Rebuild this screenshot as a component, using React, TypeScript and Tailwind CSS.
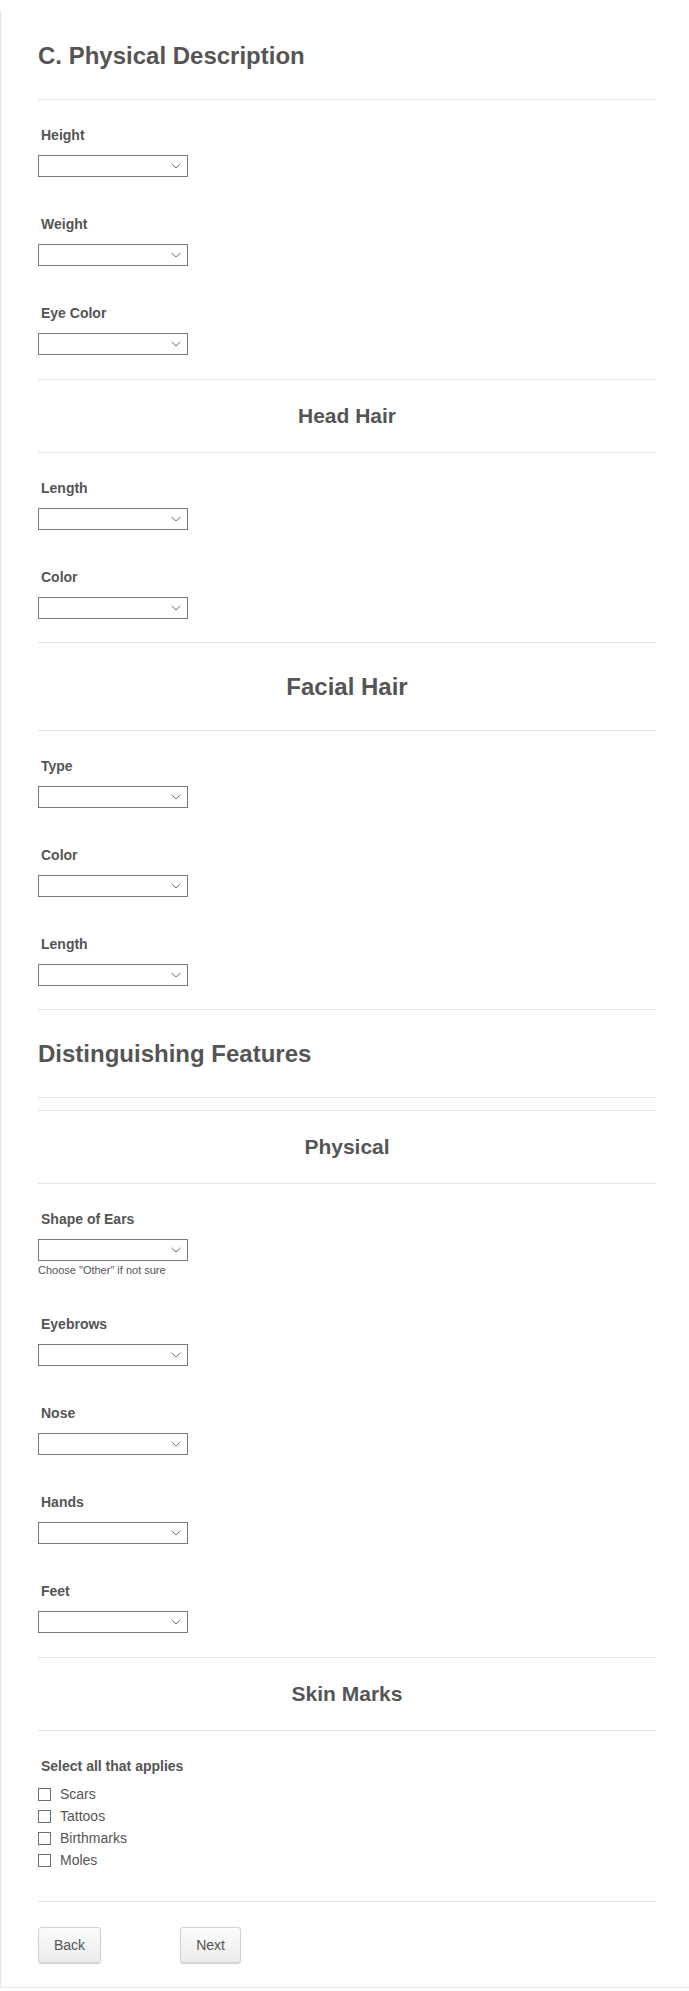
import React from 'react';

const font = { fontFamily: '"Liberation Sans", Arial, sans-serif' };

type Item =
  | { kind: 'title'; text: string }
  | { kind: 'big'; text: string; center?: boolean }
  | { kind: 'sub'; text: string }
  | { kind: 'field'; label: string; help?: string }
  | { kind: 'checks'; label: string; options: string[] };

const items: Item[] = [
  { kind: 'title', text: 'C. Physical Description' },
  { kind: 'field', label: 'Height' },
  { kind: 'field', label: 'Weight' },
  { kind: 'field', label: 'Eye Color' },
  { kind: 'sub', text: 'Head Hair' },
  { kind: 'field', label: 'Length' },
  { kind: 'field', label: 'Color' },
  { kind: 'big', text: 'Facial Hair', center: true },
  { kind: 'field', label: 'Type' },
  { kind: 'field', label: 'Color' },
  { kind: 'field', label: 'Length' },
  { kind: 'big', text: 'Distinguishing Features' },
  { kind: 'sub', text: 'Physical' },
  { kind: 'field', label: 'Shape of Ears', help: 'Choose "Other" if not sure' },
  { kind: 'field', label: 'Eyebrows' },
  { kind: 'field', label: 'Nose' },
  { kind: 'field', label: 'Hands' },
  { kind: 'field', label: 'Feet' },
  { kind: 'sub', text: 'Skin Marks' },
  { kind: 'checks', label: 'Select all that applies', options: ['Scars', 'Tattoos', 'Birthmarks', 'Moles'] },
];

function Chevron() {
  return (
    <svg width="10" height="6" viewBox="0 0 10 6" fill="none">
      <path d="M0.5 0.8 L5 5 L9.5 0.8" stroke="#6f6f6f" strokeWidth="1" />
    </svg>
  );
}

function SelectBox() {
  return (
    <div className="w-[150px] h-[22px] border border-[#7a7a7a] bg-white flex items-center justify-end pr-[6px]">
      <Chevron />
    </div>
  );
}

function Field({ label, help }: { label: string; help?: string }) {
  return (
    <div className="pt-[26px] pb-[12px]">
      <div className="pl-[3px] text-[14px] leading-[18px] font-bold text-[#555]">{label}</div>
      <div className="mt-[11px]">
        <SelectBox />
      </div>
      {help && <div className="mt-[2px] text-[11px] leading-[14px] text-[#555]">{help}</div>}
    </div>
  );
}

function Checks({ label, options }: { label: string; options: string[] }) {
  return (
    <div className="pt-[26px] pb-[18px]">
      <div className="pl-[3px] text-[14px] leading-[18px] font-bold text-[#555]">{label}</div>
      <div className="mt-[8px] flex flex-col">
        {options.map((o) => (
          <label key={o} className="h-[22px] flex items-center gap-[9px] text-[14px] text-[#555]">
            <span className="w-[13px] h-[13px] border border-[#6f6f6f] bg-white" />
            {o}
          </label>
        ))}
      </div>
    </div>
  );
}

export default function App() {
  return (
    <div className="min-h-screen bg-white" style={font}>
      <div className="border-l border-b border-[#e4e4e4] bg-white pl-[37px] pr-[33px]">
        {items.map((it, i) => {
          if (it.kind === 'title')
            return (
              <div key={i} className="mt-[12px] pt-[29px] pb-[29px] border-b border-[#e4e4e4]">
                <h1 className="text-[24px] leading-[29px] font-bold text-[#555]">{it.text}</h1>
              </div>
            );
          if (it.kind === 'big')
            return (
              <div key={i} className="mt-[11px] pt-[29px] pb-[29px] border-y border-[#e4e4e4]">
                <h2 className={`text-[24px] leading-[29px] font-bold text-[#555] ${it.center ? 'text-center' : ''}`}>{it.text}</h2>
              </div>
            );
          if (it.kind === 'sub')
            return (
              <div key={i} className="mt-[12px] py-[23px] border-y border-[#e4e4e4]">
                <h3 className="text-[21px] leading-[26px] font-bold text-[#555] text-center">{it.text}</h3>
              </div>
            );
          if (it.kind === 'checks') return <Checks key={i} label={it.label} options={it.options} />;
          return <Field key={i} label={it.label} help={it.help} />;
        })}

        <div className="mt-[12px] border-t border-[#e4e4e4] pt-[25px] pb-[24px] flex items-center">
          <button className="h-[36px] px-[15px] text-[14px] text-[#555] rounded-[3px] border border-[#d2d2d2] bg-linear-to-b from-[#fbfbfb] to-[#ececec] shadow-[0_1px_1px_rgba(0,0,0,0.18)]">
            Back
          </button>
          <button className="ml-[79px] h-[36px] px-[15px] text-[14px] text-[#555] rounded-[3px] border border-[#d2d2d2] bg-linear-to-b from-[#fbfbfb] to-[#ececec] shadow-[0_1px_1px_rgba(0,0,0,0.18)]">
            Next
          </button>
        </div>
      </div>
    </div>
  );
}
